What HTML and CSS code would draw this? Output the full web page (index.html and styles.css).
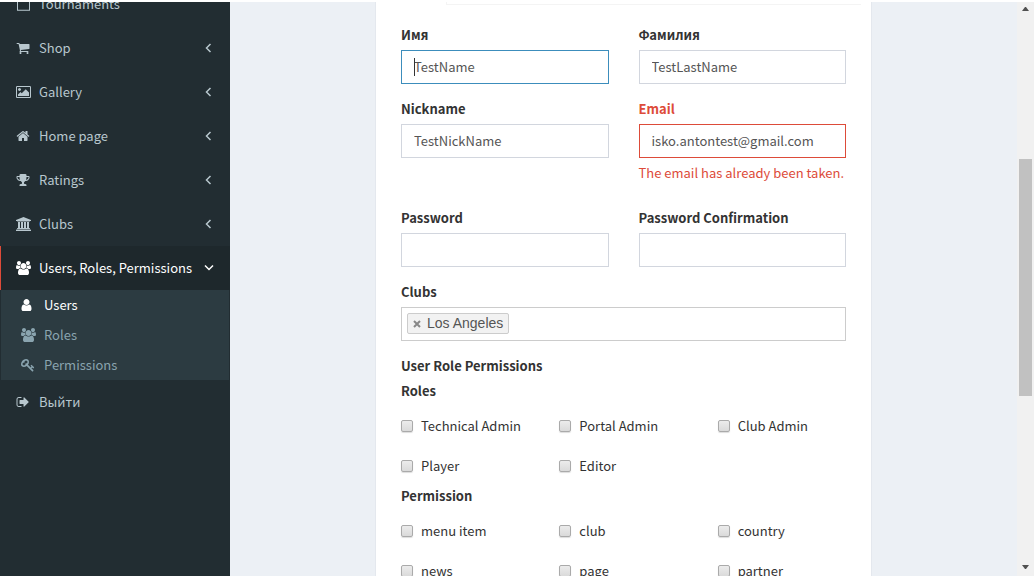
FILE: index.html
```html
<!DOCTYPE html>
<html lang="ru">
<head>
<meta charset="utf-8">
<title>Users</title>
<link rel="stylesheet" href="styles.css">
</head>
<body>
<svg class="defs" aria-hidden="true">
<symbol id="calendar" viewBox="64 0 1792 1792"><path d="M128 256h1664v1500H128zM256 384v1244h1408V384z" fill-rule="evenodd"/></symbol>
<symbol id="cart" viewBox="64 0 1792 1792"><path d="M704 1536q0 52-38 90t-90 38-90-38-38-90 38-90 90-38 90 38 38 90zm896 0q0 52-38 90t-90 38-90-38-38-90 38-90 90-38 90 38 38 90zm128-1088v512q0 24-16.5 42.5t-40.5 21.5l-1044 122q13 60 13 70 0 16-24 64h920q26 0 45 19t19 45-19 45-45 19h-1024q-26 0-45-19t-19-45q0-11 8-31.5t16-36 21.5-40 15.5-29.5l-177-823h-204q-26 0-45-19t-19-45 19-45 45-19h256q16 0 28.5 6.5t19.5 15.5 13 24.5 8 26 5.5 29.5 4.5 26h1201q26 0 45 19t19 45z"/></symbol>
<symbol id="image" viewBox="-64 0 1920 1792"><path d="M576 576q0 80-56 136t-136 56-136-56-56-136 56-136 136-56 136 56 56 136zm1024 384v448h-1408v-192l320-320 160 160 512-512zm96-704h-1600q-13 0-22.5 9.5t-9.5 22.5v1216q0 13 9.5 22.5t22.5 9.5h1600q13 0 22.5-9.5t9.5-22.5v-1216q0-13-9.5-22.5t-22.5-9.5zm160 32v1216q0 66-47 113t-113 47h-1600q-66 0-113-47t-47-113v-1216q0-66 47-113t113-47h1600q66 0 113 47t47 113z"/></symbol>
<symbol id="home" viewBox="64 0 1792 1792"><path d="M1472 992v480q0 26-19 45t-45 19h-384v-384h-256v384h-384q-26 0-45-19t-19-45v-480q0-1 .5-3t.5-3l575-474 575 474q1 2 1 6zm223-69l-62 74q-8 9-21 11h-3q-13 0-21-7l-692-577-692 577q-12 8-24 7-13-2-21-11l-62-74q-8-10-7-23.5t11-21.5l719-599q32-26 76-26t76 26l244 204v-195q0-14 9-23t23-9h192q14 0 23 9t9 23v408l219 182q10 8 11 21.5t-7 23.5z"/></symbol>
<symbol id="trophy" viewBox="64 0 1792 1792"><path d="M522 883q-74-162-74-371h-256v96q0 78 94.5 162t235.5 113zm1078-275v-96h-256q0 209-74 371 141-29 235.5-113t94.5-162zm128-128v128q0 71-41.5 143t-112 130-173 97.5-215.5 44.5q-42 54-95 95-38 34-52.5 72.5t-14.5 89.5q0 54 30.5 91t97.5 37q75 0 133.5 45.5t58.5 114.5v64q0 14-9 23t-23 9h-832q-14 0-23-9t-9-23v-64q0-69 58.5-114.5t133.5-45.5q67 0 97.5-37t30.5-91q0-51-14.5-89.5t-52.5-72.5q-53-41-95-95-113-5-215.5-44.5t-173-97.5-112-130-41.5-143v-128q0-40 28-68t68-28h288v-96q0-66 47-113t113-47h576q66 0 113 47t47 113v96h288q40 0 68 28t28 68z"/></symbol>
<symbol id="bank" viewBox="-64 0 1920 1792"><path d="M896 0l960 384v128h-128q0 26-20.5 45t-48.5 19h-1526q-28 0-48.5-19t-20.5-45h-128v-128zm-704 640h256v768h128v-768h256v768h128v-768h256v768h128v-768h256v768h59q28 0 48.5 19t20.5 45v64h-1664v-64q0-26 20.5-45t48.5-19h59v-768zm1595 960q28 0 48.5 19t20.5 45v128h-1920v-128q0-26 20.5-45t48.5-19h1782z"/></symbol>
<symbol id="group" viewBox="-64 0 1920 1792"><path d="M529 896q-162 5-265 128h-134q-82 0-138-40.5t-56-118.5q0-353 124-353 6 0 43.5 21t97.5 42.5 119 21.5q67 0 133-23-5 37-5 66 0 159 81 256zm1071 637q0 120-73 189.5t-194 69.5h-874q-121 0-194-69.5t-73-189.5q0-53 3.5-103.5t14-109 26.5-108.5 43-97.5 62-81 85.5-53.5 111.5-20q10 0 43 21.5t73 48 107 48 135 21.5 135-21.5 107-48 73-48 43-21.5q61 0 111.5 20t85.5 53.5 62 81 43 97.5 26.5 108.5 14 109 3.5 103.5zm-1024-1277q0 106-75 181t-181 75-181-75-75-181 75-181 181-75 181 75 75 181zm704 384q0 159-112.5 271.5t-271.5 112.5-271.5-112.5-112.5-271.5 112.5-271.5 271.5-112.5 271.5 112.5 112.5 271.5zm576 225q0 78-56 118.5t-138 40.5h-134q-103-123-265-128 81-97 81-256 0-29-5-66 66 23 133 23 59 0 119-21.5t97.5-42.5 43.5-21q124 0 124 353zm-128-609q0 106-75 181t-181 75-181-75-75-181 75-181 181-75 181 75 75 181z"/></symbol>
<symbol id="user" viewBox="256 0 1792 1792"><path d="M1536 1399q0 109-62.5 187t-150.5 78h-854q-88 0-150.5-78t-62.5-187q0-85 8.5-160.5t31.5-152 58.5-131 94-89 134.5-34.5q131 128 313 128t313-128q76 0 134.5 34.5t94 89 58.5 131 31.5 152 8.5 160.5zm-256-887q0 159-112.5 271.5t-271.5 112.5-271.5-112.5-112.5-271.5 112.5-271.5 271.5-112.5 271.5 112.5 112.5 271.5z"/></symbol>
<symbol id="key" viewBox="64 0 1792 1792"><path d="M832 512q0-80-56-136t-136-56-136 56-56 136q0 42 19 83-41-19-83-19-80 0-136 56t-56 136 56 136 136 56 136-56 56-136q0-42-19-83 41 19 83 19 80 0 136-56t56-136zm851 704q0 17-49 66t-66 49q-9 0-28.5-16t-36.5-33-38.5-40-24.5-26l-96 96 220 220q28 28 28 68 0 42-39 81t-81 39q-40 0-68-28l-671-671q-176 131-365 131-163 0-265.5-102.5t-102.5-265.5q0-160 95-313t248-248 313-95q163 0 265.5 102.5t102.5 265.5q0 189-131 365l355 355 96-96q-3-3-26-24.5t-40-38.5-33-36.5-16-28.5q0-17 49-66t66-49q13 0 23 10 6 6 46 44.5t82 79.5 86.5 86 73 78 28.5 41z"/></symbol>
<symbol id="exit" viewBox="64 0 1792 1792"><path d="M704 1440q0 4 1 20t.5 26.5-3 23.5-10 19.5-20.5 6.5h-320q-119 0-203.5-84.5t-84.5-203.5v-704q0-119 84.5-203.5t203.5-84.5h320q13 0 22.5 9.5t9.5 22.5q0 4 1 20t.5 26.5-3 23.5-10 19.5-20.5 6.5h-320q-66 0-113 47t-47 113v704q0 66 47 113t113 47h312l11.5 1 11.5 3 8 5.5 7 9 2 13.5zm928-544q0 26-19 45l-544 544q-19 19-45 19t-45-19-19-45v-288h-448q-26 0-45-19t-19-45v-384q0-26 19-45t45-19h448v-288q0-26 19-45t45-19 45 19l544 544q19 19 19 45z"/></symbol>
<symbol id="left" viewBox="0 0 10 10"><path d="M6.500 1L2.500 5l4 4" class="stroke"/></symbol>
<symbol id="down" viewBox="0 0 10 10"><path d="M1 2.500l4 4 4-4" class="stroke"/></symbol>
</svg>
<div class="app">
  <nav class="sidebar">
    <ul class="menu">
      <li><a href="#"><svg class="icon"><use href="#calendar"/></svg><span>Tournaments</span></a></li>
      <li><a href="#"><svg class="icon"><use href="#cart"/></svg><span>Shop</span><svg class="angle"><use href="#left"/></svg></a></li>
      <li><a href="#"><svg class="icon"><use href="#image"/></svg><span>Gallery</span><svg class="angle"><use href="#left"/></svg></a></li>
      <li><a href="#"><svg class="icon"><use href="#home"/></svg><span>Home page</span><svg class="angle"><use href="#left"/></svg></a></li>
      <li><a href="#"><svg class="icon"><use href="#trophy"/></svg><span>Ratings</span><svg class="angle"><use href="#left"/></svg></a></li>
      <li><a href="#"><svg class="icon"><use href="#bank"/></svg><span>Clubs</span><svg class="angle"><use href="#left"/></svg></a></li>
      <li class="active"><a href="#"><svg class="icon"><use href="#group"/></svg><span>Users, Roles, Permissions</span><svg class="angle"><use href="#down"/></svg></a>
        <ul class="submenu">
          <li><a class="current" href="#"><svg class="icon"><use href="#user"/></svg><span>Users</span></a></li>
          <li><a href="#"><svg class="icon"><use href="#group"/></svg><span>Roles</span></a></li>
          <li><a href="#"><svg class="icon"><use href="#key"/></svg><span>Permissions</span></a></li>
        </ul>
      </li>
      <li><a href="#"><svg class="icon"><use href="#exit"/></svg><span>Выйти</span></a></li>
    </ul>
  </nav>
  <main class="content">
    <form class="card">
      <div class="tabline"></div>
      <div class="fields">
        <div class="field"><label for="first">Имя</label><div class="caret"><input class="focused" id="first" type="text" value="TestName"></div></div>
        <div class="field"><label for="last">Фамилия</label><input id="last" type="text" value="TestLastName"></div>
        <div class="field"><label for="nick">Nickname</label><input id="nick" type="text" value="TestNickName"></div>
        <div class="field error"><label for="email">Email</label><input id="email" type="email" value="isko.antontest@gmail.com"><p class="help">The email has already been taken.</p></div>
        <div class="field"><label for="pass">Password</label><input id="pass" type="password"></div>
        <div class="field"><label for="confirm">Password Confirmation</label><input id="confirm" type="password"></div>
        <div class="field wide"><label for="clubs">Clubs</label>
          <div class="multi"><span class="chip"><button type="button" aria-label="Remove Los Angeles"><svg viewBox="0 0 8 8"><path d="M1 1l6 6M7 1L1 7"/></svg></button>Los Angeles</span><input id="clubs" type="text"></div>
        </div>
      </div>
      <h2 class="heading">User Role Permissions</h2>
      <h3 class="heading">Roles</h3>
      <div class="checks">
        <label><input type="checkbox">Technical Admin</label>
        <label><input type="checkbox">Portal Admin</label>
        <label><input type="checkbox">Club Admin</label>
        <label><input type="checkbox">Player</label>
        <label><input type="checkbox">Editor</label>
      </div>
      <h3 class="heading">Permission</h3>
      <div class="checks">
        <label><input type="checkbox">menu item</label>
        <label><input type="checkbox">club</label>
        <label><input type="checkbox">country</label>
        <label><input type="checkbox">news</label>
        <label><input type="checkbox">page</label>
        <label><input type="checkbox">partner</label>
      </div>
    </form>
  </main>
  <div class="scrollbar" aria-hidden="true">
    <svg class="arrow" viewBox="0 0 7 4"><path d="M0 4h7L4 0H3z"/></svg>
    <div class="track"><div class="thumb"></div></div>
    <svg class="arrow" viewBox="0 0 7 4"><path d="M0 0h7L4 4H3z"/></svg>
  </div>
</div>
</body>
</html>
```
FILE: styles.css
```css
* { box-sizing: border-box; }

body {
  margin: 0;
  font-family: "Noto Sans CJK SC", "Noto Sans", sans-serif;
  font-size: 13px;
  line-height: 20px;
  color: #333;
  background: #fff;
  overflow: hidden;
}

ul, p, h2, h3 { margin: 0; padding: 0; list-style: none; }

.defs { display: none; }

.app {
  display: flex;
  height: 100vh;
  border-top: 2px solid #fff;
  overflow: hidden;
}

/* Sidebar */
.sidebar {
  flex: 0 0 230px;
  background: #222d32;
  overflow: hidden;
}

.menu { margin-top: -20px; }

.menu a {
  display: flex;
  align-items: center;
  height: 44px;
  padding: 0 16px 0 15px;
  border-left: 1px solid transparent;
  color: #b8c7ce;
  text-decoration: none;
}

.menu .icon { flex: none; width: 15px; height: 14px; margin-right: 8px; fill: currentColor; }
.angle { width: 10px; height: 10px; margin-left: auto; }
.stroke { fill: none; stroke: currentColor; stroke-width: 1.5; }

.menu > .active > a {
  border-left-color: #dd4b39;
  background: #1e282c;
  color: #fff;
}

.submenu { margin: 0 1px; background: #2c3b41; }
.submenu a { height: 30px; padding-left: 19px; color: #8aa4af; }
.submenu .current { color: #fff; }

/* Form card */
.content { flex: 1; background: #ecf0f5; overflow: hidden; }

.card {
  max-width: 497px;
  margin: 0 auto;
  padding: 0 25px;
  border: solid #e4e8ee;
  border-width: 0 1px;
  background: #fff;
}

.tabline {
  height: 3px;
  margin: 0 -15px 20px 45px;
  border-left: 1px solid #f4f4f4;
  border-bottom: 1px solid #f4f4f4;
}

.fields {
  display: grid;
  grid-template-columns: 1fr 1fr;
  gap: 15px 30px;
}

.wide { grid-column: 1 / -1; }
.field label, .heading { display: block; font-size: 13px; font-weight: 700; }
.field label { margin-bottom: 5px; }

.field input {
  display: block;
  width: 100%;
  height: 34px;
  padding: 0 12px 2px;
  border: 1px solid #d2d6de;
  border-radius: 0;
  outline: 0;
  background: #fff;
  color: #555;
  font: inherit;
}

.field .focused { border-color: #3c8dbc; }
.error label, .help { color: #dd4b39; }
.field.error input { border-color: #dd4b39; }
.help { margin: 5px 0 10px; }

.caret { position: relative; }
.caret::before {
  content: "";
  position: absolute;
  left: 13px;
  top: 8px;
  width: 1px;
  height: 18px;
  background: #333;
}

.multi {
  display: flex;
  align-items: center;
  height: 34px;
  padding: 0 5px 1px;
  border: 1px solid #ccc;
}

.chip {
  display: flex;
  align-items: center;
  flex: none;
  height: 21px;
  padding: 0 5px;
  border: 1px solid #ccc;
  border-radius: 2px;
  background: #f2f2f2;
  color: #555;
  font: 14px/19px "Liberation Sans", Arial, sans-serif;
}

.chip button {
  display: flex;
  width: 8px;
  margin-right: 6px;
  padding: 0;
  border: 0;
  background: none;
}
.chip svg { width: 8px; height: 8px; stroke: #888; stroke-width: 2; }
.field .multi input { flex: 1; min-width: 0; height: 30px; border: 0; }

.heading { margin-bottom: 5px; }
.fields + .heading { margin-top: 15px; }

.checks {
  display: grid;
  grid-template-columns: repeat(3, 1fr);
  row-gap: 20px;
  margin: 15px -30px 20px 0;
}
.checks + .heading { margin-top: -10px; }

.checks label { display: flex; align-items: center; }
.checks input {
  appearance: none;
  width: 12px;
  height: 12px;
  margin: 0 8px 0 0;
  border: 1px solid #aaa;
  border-radius: 2px;
  background: linear-gradient(#ececec, #dadada);
  box-shadow: 0 1px 1px #ddd;
}

/* Scrollbar */
.scrollbar {
  display: flex;
  flex-direction: column;
  align-items: center;
  flex: 0 0 17px;
  padding: 5px 0 7px;
  background: #f1f1f1;
}
.arrow { width: 7px; height: 4px; fill: #505050; }
.track { display: flex; flex: 1; flex-direction: column; width: 13px; }
.track::before { content: ""; flex: 148; }
.track::after { content: ""; flex: 169; }
.thumb { flex: 237; background: #c1c1c1; }
```
